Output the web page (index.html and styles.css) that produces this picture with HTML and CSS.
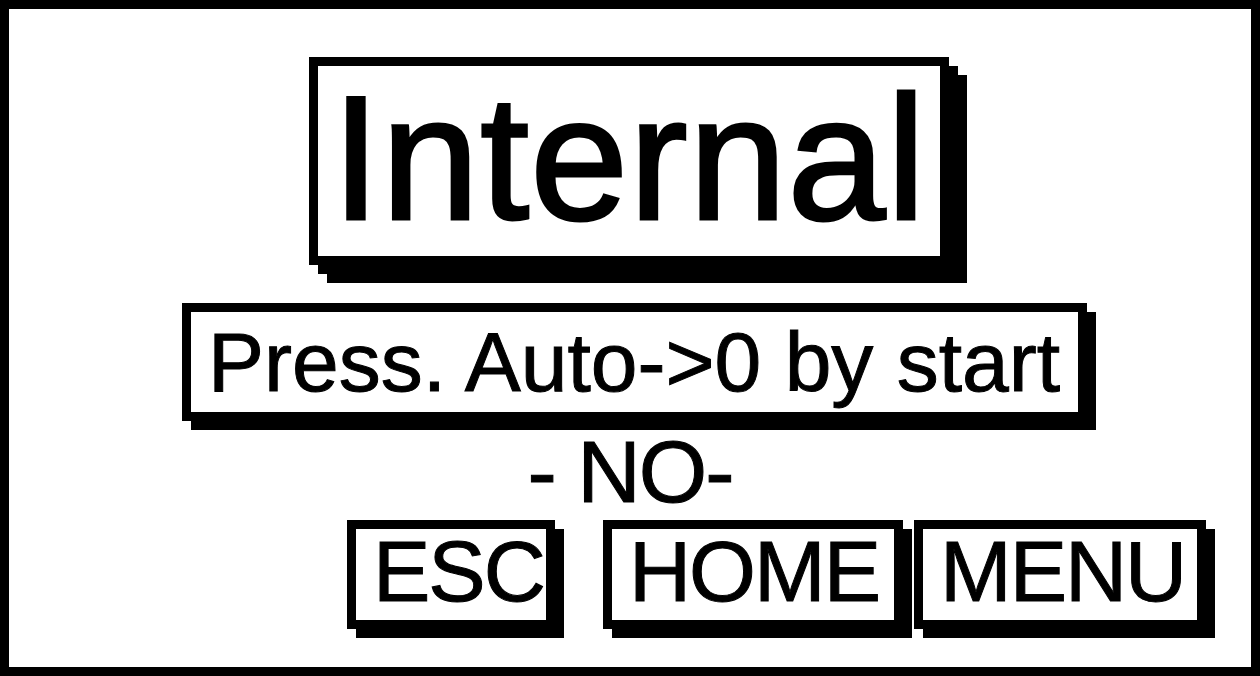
FILE: index.html
```html
<!DOCTYPE html>
<html lang="en">
<head>
  <meta charset="UTF-8" />
  <meta name="viewport" content="width=device-width, initial-scale=1.0"/>
  <title>Pressure Setup</title>
  <link rel="stylesheet" href="styles.css">
</head>
<body>
  <!-- LCD ekran -->
  <div class="screen">
    <div class="title-box">
      <div class="title-text">Internal</div>
    </div>

    <div class="param-box">
      <div class="param-text">Press. Auto-&gt;0 by start</div>
    </div>

    <div class="value">- NO-</div>

    <!-- Pastki tugmalar -->
    <div class="keys">
      <div class="key key-esc">ESC</div>
      <div class="key key-home">HOME</div>
      <div class="key key-menu">MENU</div>
    </div>
  </div>
</body>
</html>
```

FILE: styles.css
```css
* { margin: 0; padding: 0; box-sizing: border-box; }
body {
  background-color: #fff;
  font-family: "Liberation Sans", Arial, sans-serif;
  color: #000;
}
.screen {
  width: 1260px;
  height: 676px;
  border: 9px solid #000;
  background-color: #fff;
  display: flex;
  flex-direction: column;
  align-items: flex-start;
}
/* Sarlavha: ikki qavatli soya */
.title-box {
  width: 640px;
  margin-top: 48px;
  margin-left: 300px;
  border: 9px solid #000;
  background-color: #fff;
  box-shadow: 9px 9px 0 #000, 18px 18px 0 #000;
}
.title-text {
  font-size: 176px;
  line-height: 184px;
  padding-bottom: 6px;
  letter-spacing: 1px;
  text-align: center;
  -webkit-text-stroke: 3px #000;
}
.param-box {
  width: 905px;
  margin-top: 38px;
  margin-left: 173px;
  border: 9px solid #000;
  background-color: #fff;
  box-shadow: 9px 9px 0 #000;
}
.param-text {
  font-size: 84px;
  line-height: 100px;
  padding-left: 17px;
  white-space: nowrap;
  -webkit-text-stroke: 1px #000;
}
.value {
  align-self: center;
  margin-top: 13px;
  font-size: 88px;
  line-height: 76px;
  letter-spacing: -2px;
  white-space: pre;
  -webkit-text-stroke: 1px #000;
}
.keys {
  display: flex;
  margin-top: 10px;
  margin-left: 338px;
}
.key {
  height: 109px;
  border: 9px solid #000;
  background-color: #fff;
  box-shadow: 9px 9px 0 #000;
  font-size: 86px;
  line-height: 85px;
  letter-spacing: -2px;
  padding-left: 17px;
  padding-bottom: 6px;
  white-space: nowrap;
  -webkit-text-stroke: 1px #000;
}
.key-esc { width: 208px; }
.key-home { width: 300px; margin-left: 48px; }
.key-menu { width: 292px; margin-left: 11px; }
```
